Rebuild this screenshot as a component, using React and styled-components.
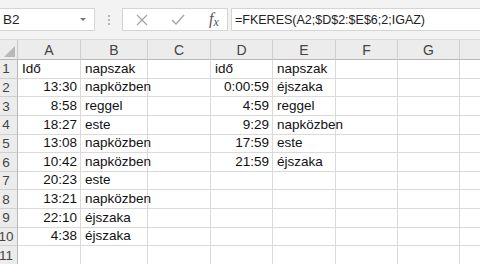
import React from 'react';
import styled, { createGlobalStyle } from 'styled-components';

const GlobalStyle = createGlobalStyle`
  html, body {
    margin: 0;
    padding: 0;
    background: #fff;
    overflow: hidden;
  }
  body {
    font-family: "Liberation Sans", Arial, sans-serif;
  }
`;

const columns = ['A', 'B', 'C', 'D', 'E', 'F', 'G', 'H'];
const colWidths = '18px 63px 67px 63px 62px 63px 62px 62px 62px';

const rows = [
  ['Idő', 'napszak', '', 'idő', 'napszak'],
  ['13:30', 'napközben', '', '0:00:59', 'éjszaka'],
  ['8:58', 'reggel', '', '4:59', 'reggel'],
  ['18:27', 'este', '', '9:29', 'napközben'],
  ['13:08', 'napközben', '', '17:59', 'este'],
  ['10:42', 'napközben', '', '21:59', 'éjszaka'],
  ['20:23', 'este'],
  ['13:21', 'napközben'],
  ['22:10', 'éjszaka'],
  ['4:38', 'éjszaka'],
  [],
];

const Page = styled.div`
  width: 480px;
  height: 264px;
  overflow: hidden;
`;

const Toolbar = styled.div`
  display: flex;
  align-items: center;
  height: 39px;
  background: #f3f3f3;
  box-sizing: border-box;
`;

const NameBox = styled.div`
  display: flex;
  align-items: center;
  justify-content: space-between;
  width: 95px;
  height: 23px;
  box-sizing: border-box;
  background: #fff;
  border: 1px solid #d4d4d4;
  border-left: none;
  padding: 0 8px 0 3px;
  font-size: 13.5px;
  color: #222;
`;

const DropArrow = styled.span`
  width: 0;
  height: 0;
  border-left: 3px solid transparent;
  border-right: 3px solid transparent;
  border-top: 3px solid #777;
`;

const Grip = styled.div`
  display: flex;
  flex-direction: column;
  gap: 2px;
  margin: 0 12px 0 13px;
  span {
    width: 2px;
    height: 2px;
    background: #b5b5b5;
  }
`;

const ButtonBox = styled.div`
  display: flex;
  align-items: center;
  width: 106px;
  height: 23px;
  box-sizing: border-box;
  background: #fff;
  border: 1px solid #d4d4d4;
  padding-left: 13px;
  gap: 23px;
`;

const Fx = styled.span`
  font-family: "Liberation Serif", "Times New Roman", serif;
  font-style: italic;
  font-size: 16px;
  color: #555;
  margin-left: 1px;
  sub {
    font-size: 12px;
    vertical-align: -2px;
  }
`;

const FormulaInput = styled.div`
  flex: 1;
  height: 23px;
  box-sizing: border-box;
  margin-left: 3px;
  background: #fff;
  border: 1px solid #d4d4d4;
  border-right: none;
  display: flex;
  align-items: center;
  padding-left: 3px;
  font-size: 12.5px;
  color: #222;
  white-space: nowrap;
`;

const Sheet = styled.div`
  display: grid;
  width: 542px;
  grid-template-columns: ${colWidths};
  grid-template-rows: 20px repeat(11, 18.65px);
  border-top: 1px solid #dadada;
`;

const Corner = styled.div`
  background: #ececec;
  border-right: 1px solid #c8c8c8;
  border-bottom: 1px solid #b8b8b8;
  position: relative;
  &::after {
    content: '';
    position: absolute;
    right: 2px;
    bottom: 2px;
    width: 0;
    height: 0;
    border-left: 11px solid transparent;
    border-bottom: 11px solid #b8b8b8;
  }
`;

const ColHead = styled.div`
  background: #ececec;
  border-right: 1px solid #d0d0d0;
  border-bottom: 1px solid #b8b8b8;
  display: flex;
  align-items: center;
  justify-content: center;
  font-size: 14px;
  color: #444;
  padding-top: 1px;
`;

const RowHead = styled.div`
  background: #ececec;
  border-right: 1px solid #b8b8b8;
  border-bottom: 1px solid #d0d0d0;
  display: flex;
  align-items: center;
  justify-content: center;
  padding-right: 5px;
  font-size: 13.5px;
  color: #444;
  overflow: hidden;
`;

const Cell = styled.div`
  border-right: 1px solid #dadada;
  border-bottom: 1px solid #dadada;
  display: flex;
  align-items: flex-end;
  justify-content: ${(p) => (p.$right ? 'flex-end' : 'flex-start')};
  padding: 0 3px 1px 4px;
  font-size: 13.5px;
  line-height: 16px;
  color: #111;
  white-space: nowrap;
  min-width: 0;
`;

const isTime = (v) => /^\d+:\d\d(:\d\d)?$/.test(v);

const CrossIcon = () => (
  <svg width="12" height="12" viewBox="0 0 12 12">
    <path d="M1 1L11 11M11 1L1 11" stroke="#a6a6a6" strokeWidth="1.3" fill="none" />
  </svg>
);

const CheckIcon = () => (
  <svg width="14" height="11" viewBox="0 0 14 11">
    <path d="M1 6L5 10L13 1" stroke="#a6a6a6" strokeWidth="1.4" fill="none" />
  </svg>
);

export default function App() {
  return (
    <Page>
      <GlobalStyle />
      <Toolbar>
        <NameBox>
          B2
          <DropArrow />
        </NameBox>
        <Grip>
          <span />
          <span />
          <span />
        </Grip>
        <ButtonBox>
          <CrossIcon />
          <CheckIcon />
          <Fx>
            f<sub>x</sub>
          </Fx>
        </ButtonBox>
        <FormulaInput>=FKERES(A2;$D$2:$E$6;2;IGAZ)</FormulaInput>
      </Toolbar>
      <Sheet>
        <Corner />
        {columns.map((c) => (
          <ColHead key={c}>{c}</ColHead>
        ))}
        {rows.map((r, i) => (
          <React.Fragment key={i}>
            <RowHead>{i + 1}</RowHead>
            {columns.map((c, j) => {
              const v = r[j] || '';
              return (
                <Cell key={c} $right={isTime(v)}>
                  {v}
                </Cell>
              );
            })}
          </React.Fragment>
        ))}
      </Sheet>
    </Page>
  );
}
